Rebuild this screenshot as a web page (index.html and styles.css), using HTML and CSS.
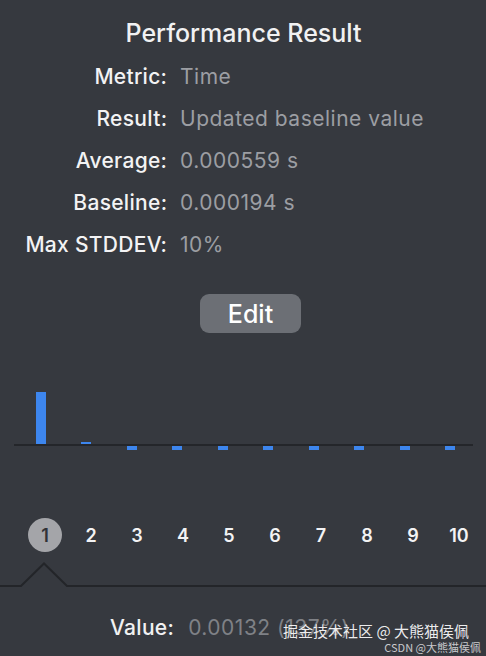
FILE: index.html
```html
<!DOCTYPE html>
<html>
<head>
<meta charset="utf-8">
<link rel="stylesheet" href="styles.css">
</head>
<body>
<div class="panel">
  <h1 class="title">Performance Result</h1>
  <div class="info">
    <div class="label">Metric:</div><div class="value">Time</div>
    <div class="label">Result:</div><div class="value">Updated baseline value</div>
    <div class="label">Average:</div><div class="value">0.000559 s</div>
    <div class="label">Baseline:</div><div class="value">0.000194 s</div>
    <div class="label">Max STDDEV:</div><div class="value">10%</div>
  </div>
  <div class="actions"><button class="edit">Edit</button></div>
  <div class="chart">
    <div class="bars up">
      <div class="col"><div class="bar" style="height:52px"></div></div>
      <div class="col"><div class="bar" style="height:2px"></div></div>
      <div class="col"></div><div class="col"></div><div class="col"></div>
      <div class="col"></div><div class="col"></div><div class="col"></div>
      <div class="col"></div><div class="col"></div>
    </div>
    <div class="axis"></div>
    <div class="bars down">
      <div class="col"></div><div class="col"></div>
      <div class="col"><div class="bar" style="height:4px"></div></div>
      <div class="col"><div class="bar" style="height:4px"></div></div>
      <div class="col"><div class="bar" style="height:4px"></div></div>
      <div class="col"><div class="bar" style="height:4px"></div></div>
      <div class="col"><div class="bar" style="height:4px"></div></div>
      <div class="col"><div class="bar" style="height:4px"></div></div>
      <div class="col"><div class="bar" style="height:4px"></div></div>
      <div class="col"><div class="bar" style="height:4px"></div></div>
    </div>
  </div>
  <div class="runs">
    <div class="run"><span class="num selected">1</span></div>
    <div class="run"><span class="num">2</span></div>
    <div class="run"><span class="num">3</span></div>
    <div class="run"><span class="num">4</span></div>
    <div class="run"><span class="num">5</span></div>
    <div class="run"><span class="num">6</span></div>
    <div class="run"><span class="num">7</span></div>
    <div class="run"><span class="num">8</span></div>
    <div class="run"><span class="num">9</span></div>
    <div class="run"><span class="num">10</span></div>
  </div>
  <svg class="pointer" width="486" height="26" viewBox="0 0 486 26">
    <polyline points="0,24 21,24 44,1.5 67,24 486,24" fill="none" stroke="#232529" stroke-width="2"/>
  </svg>
  <div class="detail">
    <span class="dlabel">Value:</span>
    <span class="dvalue">0.00132 (137%)</span>
  </div>
  <div class="watermark">
    <div class="wm1">掘金技术社区 @ 大熊猫侯佩</div>
    <div class="wm2">CSDN @大熊猫侯佩</div>
  </div>
</div>
</body>
</html>
```
FILE: styles.css
```css
html, body {
  margin: 0;
  padding: 0;
  background: #36393f;
}
body {
  width: 486px;
  height: 656px;
  overflow: hidden;
  font-family: Inter, "Noto Sans", sans-serif;
  color: #f1f1f2;
}
.panel {
  position: relative;
  width: 486px;
  height: 656px;
  padding-top: 19px;
  box-sizing: border-box;
}
.title {
  margin: 0;
  font-size: 25px;
  line-height: 28px;
  font-weight: 500;
  text-align: center;
  padding-left: 1px;
}
.info {
  margin-top: 8px;
  display: grid;
  grid-template-columns: 167px auto;
  column-gap: 13px;
  grid-auto-rows: 42px;
  align-items: center;
  font-size: 21px;
}
.label {
  text-align: right;
  font-weight: 500;
  letter-spacing: 0.3px;
  margin-right: -0.3px;
  color: #f3f3f4;
}
.value {
  color: #9c9ea3;
  letter-spacing: 0.5px;
}
.actions {
  margin-top: 29px;
  display: flex;
  justify-content: center;
  padding-left: 15px;
}
.edit {
  width: 101px;
  height: 39px;
  border: none;
  border-radius: 9px;
  background: #6c6f75;
  color: #ffffff;
  font-family: Inter, sans-serif;
  font-size: 25px;
  font-weight: 500;
  padding: 0;
}
.chart {
  margin-left: 14px;
  width: 459px;
}
.bars {
  display: flex;
  padding-left: 4px;
}
.bars.up {
  height: 111px;
  align-items: flex-end;
}
.bars.down {
  height: 4px;
  align-items: flex-start;
}
.col {
  width: 46px;
  display: flex;
  justify-content: center;
}
.bar {
  width: 10px;
  background: #3d86ee;
}
.axis {
  height: 2px;
  background: #24262a;
}
.runs {
  margin-top: 68px;
  margin-left: 22px;
  display: flex;
}
.run {
  width: 46px;
  display: flex;
  justify-content: center;
}
.num {
  width: 34px;
  height: 34px;
  border-radius: 50%;
  display: flex;
  align-items: center;
  justify-content: center;
  font-size: 18px;
  font-weight: 600;
  color: #f3f3f4;
}
.num.selected {
  background: #a4a5a9;
  color: #303237;
}
.pointer {
  display: block;
  margin-top: 10px;
}
.detail {
  margin-top: 27px;
  padding-left: 110px;
  font-size: 21px;
  line-height: 26px;
  display: flex;
  gap: 14px;
}
.dlabel {
  font-weight: 500;
  color: #f1f1f2;
  letter-spacing: 0.3px;
}
.dvalue {
  color: #7f8186;
  letter-spacing: 0.5px;
}
.watermark {
  position: absolute;
  right: 5px;
  bottom: 0;
  display: flex;
  flex-direction: column;
  align-items: flex-end;
  font-family: "Noto Sans CJK SC", "Noto Sans", sans-serif;
}
.wm1 {
  font-size: 15px;
  line-height: 19px;
  color: rgba(255, 255, 255, 0.92);
  margin-right: 12px;
}
.wm2 {
  font-size: 11px;
  line-height: 15px;
  color: #c9cacd;
  margin-bottom: 1px;
}
```
